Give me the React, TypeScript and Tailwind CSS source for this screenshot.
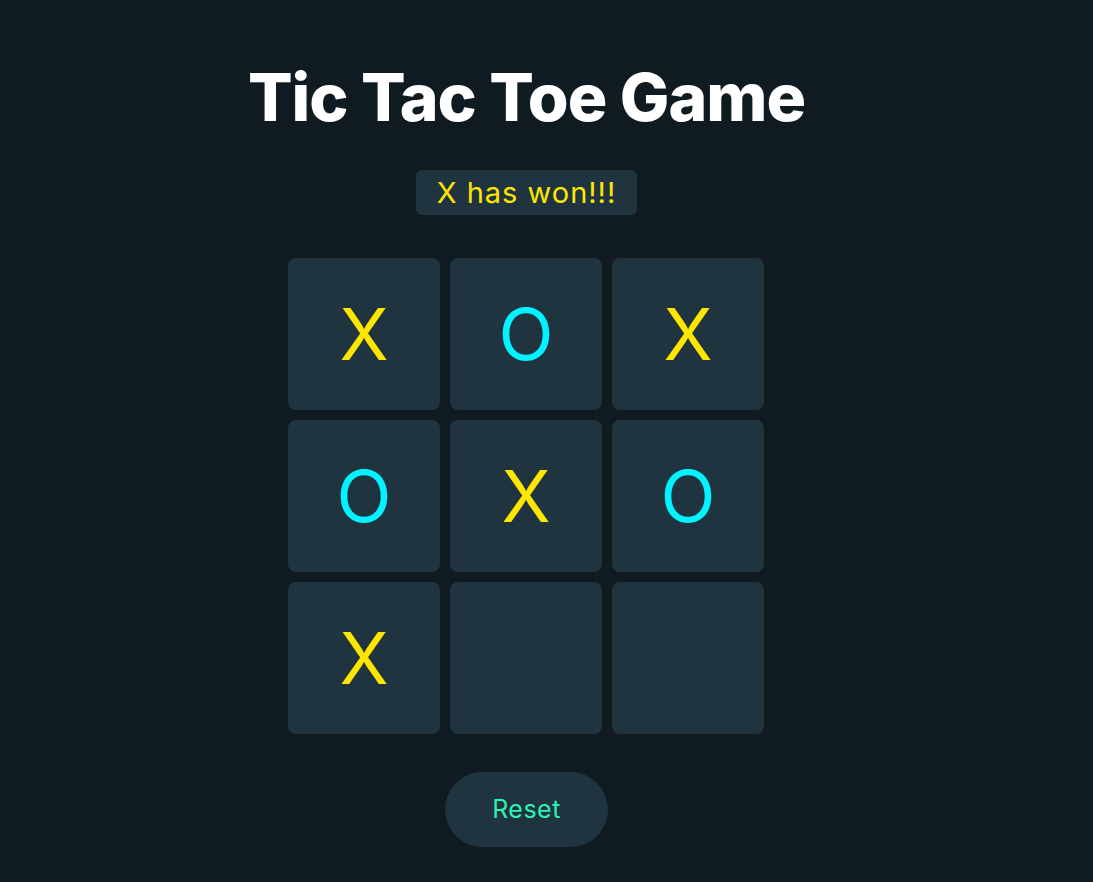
const board = ['X', 'O', 'X', 'O', 'X', 'O', 'X', '', ''];

export default function App() {
  return (
    <div
      className="min-h-screen bg-[#101a21] flex flex-col items-center pr-[40px] text-white"
      style={{ fontFamily: 'Inter, "Open Sans", sans-serif' }}
    >
      <h1 className="mt-[52px] text-[66px] leading-[90px] font-extrabold tracking-[-1px]">Tic Tac Toe Game</h1>

      <div className="mt-[28px] h-[45px] px-[21px] flex items-center bg-[#203440] rounded-md text-[29px] tracking-[1px] text-[#ffe600]">
        X has won!!!
      </div>

      <div className="mt-[43px] -ml-[1px] grid grid-cols-[repeat(3,152px)] grid-rows-[repeat(3,152px)] gap-[10px]">
        {board.map((v, i) => (
          <div
            key={i}
            className={`bg-[#203440] rounded-lg flex items-center justify-center text-[72px] font-normal ${
              v === 'X' ? 'text-[#ffe600]' : 'text-[#00f3ff]'
            }`}
          >
            {v}
          </div>
        ))}
      </div>

      <button className="mt-[38px] w-[163px] h-[75px] rounded-full bg-[#203440] text-[#2ef0b4] text-[25px] tracking-[0.5px]">
        Reset
      </button>
    </div>
  );
}
